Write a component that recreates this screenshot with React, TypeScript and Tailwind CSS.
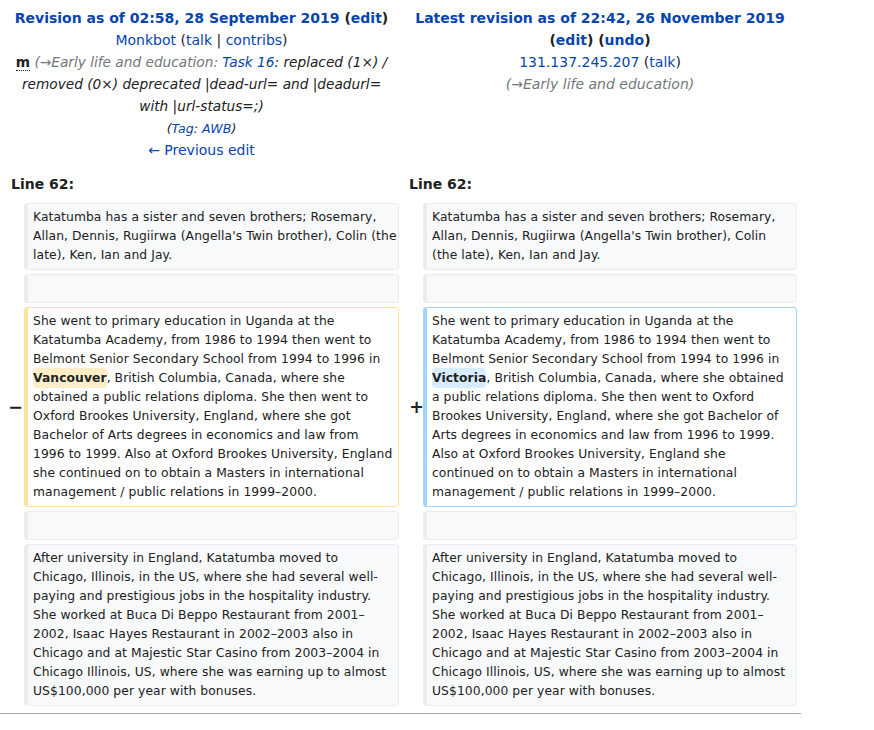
const link = "text-[#0645ad]";

const Lines = ({ lines }: { lines: React.ReactNode[] }) => (
  <>
    {lines.map((l, i) => (
      <span key={i} className="block whitespace-nowrap">
        {l}
      </span>
    ))}
  </>
);

const Context = ({ lines }: { lines?: React.ReactNode[] }) => (
  <div className="rounded-[4px] border border-l-4 border-[#eaecf0] bg-[#f8f9fa] px-[5px] py-[4px]">
    {lines ? <Lines lines={lines} /> : "\u00a0"}
  </div>
);

const Marker = ({ sign, shift }: { sign?: string; shift?: string }) => (
  <div className="flex items-center justify-end text-[17.5px] font-bold leading-[21px]">
    <span className={shift}>{sign}</span>
  </div>
);

const brothersLeft = [
  "Katatumba has a sister and seven brothers; Rosemary,",
  "Allan, Dennis, Rugiirwa (Angella's Twin brother), Colin (the",
  "late), Ken, Ian and Jay.",
];
const brothersRight = [
  "Katatumba has a sister and seven brothers; Rosemary,",
  "Allan, Dennis, Rugiirwa (Angella's Twin brother), Colin",
  "(the late), Ken, Ian and Jay.",
];

const chicago = [
  "After university in England, Katatumba moved to",
  "Chicago, Illinois, in the US, where she had several well-",
  "paying and prestigious jobs in the hospitality industry.",
  "She worked at Buca Di Beppo Restaurant from 2001–",
  "2002, Isaac Hayes Restaurant in 2002–2003 also in",
  "Chicago and at Majestic Star Casino from 2003–2004 in",
  "Chicago Illinois, US, where she was earning up to almost",
  "US$100,000 per year with bonuses.",
];

const opening = [
  "She went to primary education in Uganda at the",
  "Katatumba Academy, from 1986 to 1994 then went to",
  "Belmont Senior Secondary School from 1994 to 1996 in",
];

const deleted = [
  ...opening,
  <>
    <del className="rounded-[4px] bg-[#feeec8] py-[3px] font-bold no-underline">Vancouver</del>, British
    Columbia, Canada, where she
  </>,
  "obtained a public relations diploma. She then went to",
  "Oxford Brookes University, England, where she got",
  "Bachelor of Arts degrees in economics and law from",
  "1996 to 1999. Also at Oxford Brookes University, England",
  "she continued on to obtain a Masters in international",
  "management / public relations in 1999–2000.",
];

const added = [
  ...opening,
  <>
    <ins className="rounded-[4px] bg-[#d8ecff] py-[3px] font-bold no-underline">Victoria</ins>, British
    Columbia, Canada, where she obtained
  </>,
  "a public relations diploma. She then went to Oxford",
  "Brookes University, England, where she got Bachelor of",
  "Arts degrees in economics and law from 1996 to 1999.",
  "Also at Oxford Brookes University, England she",
  "continued on to obtain a Masters in international",
  "management / public relations in 1999–2000.",
];

export default function App() {
  return (
    <div className="min-h-screen bg-white font-['DejaVu_Sans',sans-serif] text-[#202122]">
      <div className="w-[801px] border-b border-[#a2a9b1] pb-[3px]">
        {/* titles */}
        <div className="grid grid-cols-[395px_394px] gap-x-[4px] px-[4px] pt-[7px] text-center text-[14px] leading-[22px]">
          <div>
            <div className="font-bold">
              <a className={link}>Revision as of 02:58, 28 September 2019</a> (
              <a className={link}>edit</a>)
            </div>
            <div>
              <a className={link}>Monkbot</a> (<a className={link}>talk</a> |{" "}
              <a className={link}>contribs</a>)
            </div>
            <div className="px-[8px] text-[13.7px]">
              <abbr className="font-bold no-underline border-b border-dotted border-[#202122]">m</abbr>{" "}
              <i>
                <span className="text-[#72777d]">(→Early life and education: </span>
                <a className={link}>Task 16</a>: replaced (1×) / removed (0×) deprecated |dead-url= and
                |deadurl= with |url-status=;)
              </i>
            </div>
            <div className="pt-[1px] text-[12.6px] italic leading-[21px]">
              (<a className={link}>Tag</a>: <a className={link}>AWB</a>)
            </div>
            <div>
              <a className={link}>← Previous edit</a>
            </div>
          </div>
          <div>
            <div className="font-bold">
              <a className={link}>Latest revision as of 22:42, 26 November 2019</a> (
              <a className={link}>edit</a>) (<a className={link}>undo</a>)
            </div>
            <div>
              <a className={link}>131.137.245.207</a> (<a className={link}>talk</a>)
            </div>
            <div className="italic text-[#72777d]">(→Early life and education)</div>
          </div>
        </div>

        {/* line numbers */}
        <div className="mt-[12px] grid grid-cols-[395px_394px] gap-x-[4px] px-[4px] text-[14px] font-bold leading-[22px]">
          <div className="pl-[7px]">Line 62:</div>
          <div className="pl-[6px]">Line 62:</div>
        </div>

        {/* diff rows */}
        <div className="mt-[8px] grid grid-cols-[16px_375px_16px_374px] gap-[4px] px-[4px] pb-[4px] text-[12.32px] leading-[19px] tracking-[0.08px]">
          <Marker />
          <Context lines={brothersLeft} />
          <Marker />
          <Context lines={brothersRight} />

          <Marker />
          <Context />
          <Marker />
          <Context />

          <Marker sign="−" shift="-mr-[3px]" />
          <div className="rounded-[4px] border border-l-4 border-[#ffe49c] bg-white px-[5px] py-[4px]">
            <Lines lines={deleted} />
          </div>
          <Marker sign="+" shift="-mr-[5px]" />
          <div className="rounded-[4px] border border-l-4 border-[#a3d3ff] bg-white px-[5px] py-[4px]">
            <Lines lines={added} />
          </div>

          <Marker />
          <Context />
          <Marker />
          <Context />

          <Marker />
          <Context lines={chicago} />
          <Marker />
          <Context lines={chicago} />
        </div>
      </div>
    </div>
  );
}
